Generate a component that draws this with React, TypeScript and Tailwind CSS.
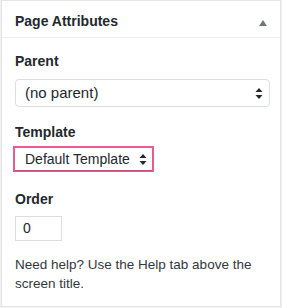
export default function App() {
  return (
    <div className="w-[282px] h-[308px] bg-[#f1f1f1] font-['Liberation_Sans',Arial,sans-serif] text-[#23282d]">
      <div className="ml-[1px] w-[280px] h-[307px] bg-white border border-[#e5e5e5] flex flex-col">
        {/* header */}
        <div className="h-[37px] border-b border-[#eeeeee] flex items-start justify-between pt-[13px] pl-[13px] pr-[13px]">
          <h2 className="text-[14px] font-bold leading-none">Page Attributes</h2>
          <svg width="8" height="6" viewBox="0 0 8 6" className="mt-[6px]">
            <path d="M4 0 L8 6 L0 6 Z" fill="#72777c" />
          </svg>
        </div>

        {/* body */}
        <div className="px-[13px] pt-[16px] text-[13px]">
          <p className="text-[14px] font-bold leading-[14px]">Parent</p>
          <div className="mt-[11px] w-[255px] h-[28px] border border-[#dddddd] rounded-[4px] flex items-center justify-between pl-[9px] pr-[6px] text-[15px]">
            <span>(no parent)</span>
            <Arrows />
          </div>

          <p className="mt-[18px] text-[14px] font-bold leading-[14px]">Template</p>
          <div className="mt-[7px] -ml-[2px] w-[141px] h-[26px] border-2 border-[#ec5b91] flex">
            <div className="flex-1 flex items-center justify-between pl-[10px] pr-[5px] bg-white shadow-[0_1px_1px_rgba(0,0,0,0.15)] text-[14px]">
              <span>Default Template</span>
              <Arrows />
            </div>
          </div>

          <p className="mt-[20px] text-[14px] font-bold leading-[14px]">Order</p>
          <div className="mt-[10px] w-[47px] h-[25px] border border-[#dddddd] flex items-center pl-[7px] text-[14px]">
            0
          </div>

          <p className="mt-[14px] leading-[19px] text-[13.5px] text-[#32373c]">
            Need help? Use the Help tab above the screen title.
          </p>
        </div>
      </div>
    </div>
  );
}

function Arrows() {
  return (
    <svg width="8" height="11" viewBox="0 0 8 11">
      <path d="M4 0 L7.5 4 L0.5 4 Z" fill="#23282d" />
      <path d="M4 11 L7.5 7 L0.5 7 Z" fill="#23282d" />
    </svg>
  );
}
